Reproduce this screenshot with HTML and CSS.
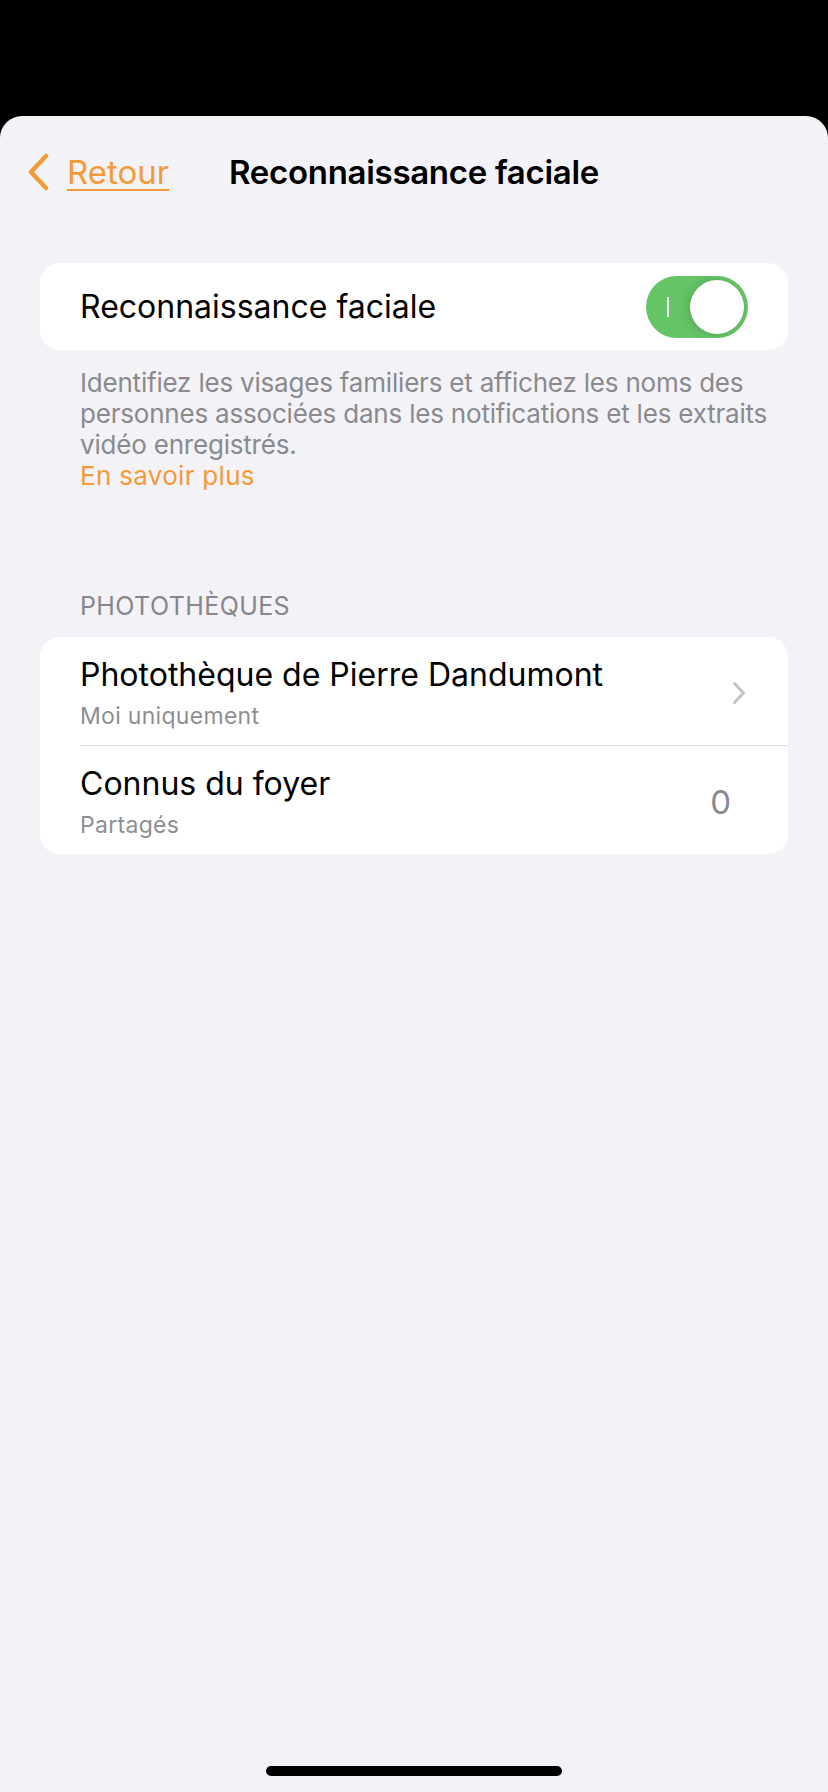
FILE: index.html
```html
<!DOCTYPE html>
<html lang="fr">

<head>
  <meta charset="UTF-8">
  <meta name="viewport" content="width=device-width, initial-scale=1.0">
  <title>Reconnaissance faciale</title>
  <link rel="stylesheet" href="styles.css">
</head>

<body>
  <div class="status-bar"></div>

  <div class="sheet">
    <header class="nav">
      <a class="back-link" href="#">
        <svg class="back-chevron" width="22" height="38" viewBox="0 0 22 38">
          <path d="M19 3 L4 19 L19 35" fill="none" stroke="currentColor" stroke-width="4.5" stroke-linecap="round" stroke-linejoin="round" />
        </svg>
        <span class="back-text">Retour</span>
      </a>
      <h1 class="nav-title">Reconnaissance faciale</h1>
    </header>

    <section class="group">
      <div class="card">
        <div class="cell cell-switch">
          <span class="cell-label">Reconnaissance faciale</span>
          <div class="toggle">
            <span class="toggle-mark"></span>
            <span class="toggle-knob"></span>
          </div>
        </div>
      </div>
      <p class="group-footer">
        Identifiez les visages familiers et affichez les noms des personnes associées dans les notifications et les extraits vidéo enregistrés.
        <a class="footer-link" href="#">En savoir plus</a>
      </p>
    </section>

    <section class="group group-libraries">
      <h2 class="group-header">Photothèques</h2>
      <div class="card">
        <div class="cell cell-row">
          <div class="cell-text">
            <span class="cell-title">Photothèque de Pierre Dandumont</span>
            <span class="cell-subtitle">Moi uniquement</span>
          </div>
          <svg class="row-chevron" width="14" height="24" viewBox="0 0 14 24">
            <path d="M2.5 2.5 L11.5 12 L2.5 21.5" fill="none" stroke="currentColor" stroke-width="3" stroke-linecap="round" stroke-linejoin="round" />
          </svg>
        </div>
        <div class="cell cell-row">
          <div class="cell-text">
            <span class="cell-title">Connus du foyer</span>
            <span class="cell-subtitle">Partagés</span>
          </div>
          <span class="cell-value">0</span>
        </div>
      </div>
    </section>

    <div class="home-indicator"></div>
  </div>
</body>

</html>
```

FILE: styles.css
```css
body {
  font-family: Inter, "Noto Sans", sans-serif;
  margin: 0;
  padding: 0;
  background-color: #000000;
  color: #000000;
  display: flex;
  flex-direction: column;
  min-height: 100vh;
}

.status-bar {
  height: 116px;
  background-color: #000000;
}

.sheet {
  flex: 1;
  display: flex;
  flex-direction: column;
  background-color: #f2f2f7;
  border-radius: 22px 22px 0 0;
}

/* navigation bar */
.nav {
  display: grid;
  grid-template-columns: 1fr auto 1fr;
  align-items: center;
  height: 112px;
}

.back-link {
  display: flex;
  align-items: center;
  gap: 18px;
  padding-left: 27px;
  color: #f29b38;
  text-decoration: none;
}

.back-chevron {
  display: block;
}

.back-text {
  font-size: 33px;
  text-decoration: underline;
  text-decoration-thickness: 2px;
  text-underline-offset: 5px;
}

.nav-title {
  margin: 0;
  font-size: 33px;
  font-weight: 600;
  letter-spacing: -0.3px;
  text-align: center;
}

/* grouped lists */
.group {
  margin: 35px 40px 0;
}

.group-libraries {
  margin-top: 100px;
}

.card {
  background-color: #ffffff;
  border-radius: 20px;
  overflow: hidden;
}

.cell {
  display: flex;
  align-items: center;
  justify-content: space-between;
  padding-left: 40px;
}

.cell-switch {
  height: 87px;
  padding-right: 40px;
}

.cell-label {
  font-size: 32px;
}

.toggle {
  display: flex;
  align-items: center;
  justify-content: space-between;
  width: 102px;
  height: 62px;
  box-sizing: border-box;
  padding: 0 4px 0 21px;
  border-radius: 31px;
  background-color: #65c466;
}

.toggle-mark {
  width: 2px;
  height: 20px;
  background-color: #ffffff;
}

.toggle-knob {
  width: 54px;
  height: 54px;
  border-radius: 50%;
  background-color: #ffffff;
  box-shadow: -3px 0 8px rgba(0, 0, 0, 0.12), 0 1px 2px rgba(0, 0, 0, 0.08);
}

.group-footer {
  margin: 0;
  padding: 17px 0 0 40px;
  font-size: 26px;
  line-height: 31px;
  letter-spacing: -0.2px;
  color: #8a8a8e;
}

.footer-link {
  display: block;
  color: #f29b38;
  letter-spacing: 0.3px;
  text-decoration: none;
}

.group-header {
  margin: 0 0 15px;
  padding-left: 40px;
  font-size: 25px;
  font-weight: 400;
  line-height: 31px;
  letter-spacing: 0.4px;
  text-transform: uppercase;
  color: #86868b;
}

.cell-row {
  padding-top: 18px;
  padding-bottom: 14px;
  padding-right: 42px;
}

.cell-row + .cell-row {
  border-top: 1px solid #e0e0e3;
  margin-left: 40px;
  padding-left: 0;
  padding-right: 57px;
}

.cell-text {
  display: flex;
  flex-direction: column;
}

.cell-title {
  font-size: 32px;
  line-height: 40px;
}

.cell-subtitle {
  margin-top: 6px;
  font-size: 23px;
  line-height: 30px;
  letter-spacing: 0.3px;
  color: #8e8e93;
}

.row-chevron {
  color: #c4c4c7;
}

.cell-value {
  font-size: 33px;
  color: #8a8a8e;
}

.home-indicator {
  width: 296px;
  height: 10px;
  margin: auto auto 16px;
  border-radius: 5px;
  background-color: #000000;
}
```
